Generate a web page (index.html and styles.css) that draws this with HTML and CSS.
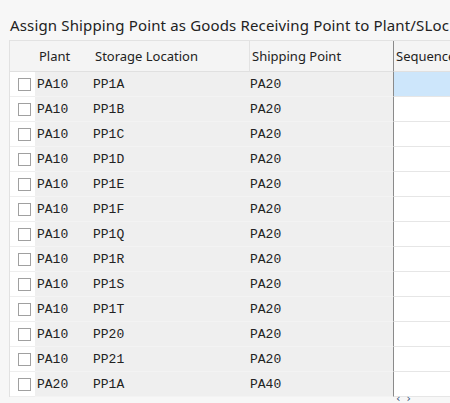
FILE: index.html
```html
<!DOCTYPE html>
<html>
<head>
<meta charset="utf-8">
<link rel="stylesheet" href="styles.css">
</head>
<body>
<div class="title">Assign Shipping Point as Goods Receiving Point to Plant/SLoc</div>
<div class="table">
  <div class="row head">
    <div class="c sel"></div>
    <div class="c plant">Plant</div>
    <div class="c sloc">Storage Location</div>
    <div class="c ship">Shipping Point</div>
    <div class="c seq">Sequence</div>
  </div>
  <div class="row active"><div class="c sel"><span class="cb"></span></div><div class="c plant">PA10</div><div class="c sloc">PP1A</div><div class="c ship">PA20</div><div class="c seq"></div></div>
  <div class="row"><div class="c sel"><span class="cb"></span></div><div class="c plant">PA10</div><div class="c sloc">PP1B</div><div class="c ship">PA20</div><div class="c seq"></div></div>
  <div class="row"><div class="c sel"><span class="cb"></span></div><div class="c plant">PA10</div><div class="c sloc">PP1C</div><div class="c ship">PA20</div><div class="c seq"></div></div>
  <div class="row"><div class="c sel"><span class="cb"></span></div><div class="c plant">PA10</div><div class="c sloc">PP1D</div><div class="c ship">PA20</div><div class="c seq"></div></div>
  <div class="row"><div class="c sel"><span class="cb"></span></div><div class="c plant">PA10</div><div class="c sloc">PP1E</div><div class="c ship">PA20</div><div class="c seq"></div></div>
  <div class="row"><div class="c sel"><span class="cb"></span></div><div class="c plant">PA10</div><div class="c sloc">PP1F</div><div class="c ship">PA20</div><div class="c seq"></div></div>
  <div class="row"><div class="c sel"><span class="cb"></span></div><div class="c plant">PA10</div><div class="c sloc">PP1Q</div><div class="c ship">PA20</div><div class="c seq"></div></div>
  <div class="row"><div class="c sel"><span class="cb"></span></div><div class="c plant">PA10</div><div class="c sloc">PP1R</div><div class="c ship">PA20</div><div class="c seq"></div></div>
  <div class="row"><div class="c sel"><span class="cb"></span></div><div class="c plant">PA10</div><div class="c sloc">PP1S</div><div class="c ship">PA20</div><div class="c seq"></div></div>
  <div class="row"><div class="c sel"><span class="cb"></span></div><div class="c plant">PA10</div><div class="c sloc">PP1T</div><div class="c ship">PA20</div><div class="c seq"></div></div>
  <div class="row"><div class="c sel"><span class="cb"></span></div><div class="c plant">PA10</div><div class="c sloc">PP20</div><div class="c ship">PA20</div><div class="c seq"></div></div>
  <div class="row"><div class="c sel"><span class="cb"></span></div><div class="c plant">PA10</div><div class="c sloc">PP21</div><div class="c ship">PA20</div><div class="c seq"></div></div>
  <div class="row"><div class="c sel"><span class="cb"></span></div><div class="c plant">PA20</div><div class="c sloc">PP1A</div><div class="c ship">PA40</div><div class="c seq"></div></div>
</div>
<div class="scroller"><span>&#8249;</span><span>&#8250;</span></div>
</body>
</html>
```
FILE: styles.css
```css
html, body {
  margin: 0;
  padding: 0;
  background: #f7f7f7;
  overflow: hidden;
  width: 450px;
  height: 403px;
}
.title {
  font-family: "Noto Sans", "DejaVu Sans", sans-serif;
  font-size: 15px;
  letter-spacing: 0.15px;
  color: #222;
  white-space: nowrap;
  padding: 15px 0 0 10px;
  height: 40px;
  line-height: 20px;
  box-sizing: border-box;
}
.table {
  margin-left: 9px;
  width: 560px;
  border-left: 1px solid #e2e2e2;
  border-top: 1px solid #e2e2e2;
}
.row {
  display: grid;
  grid-template-columns: 25px 56px 158px 145px 1fr;
  height: 25px;
}
.c {
  box-sizing: border-box;
  white-space: nowrap;
  overflow: hidden;
  display: flex;
  align-items: center;
  font-family: "Liberation Mono", "DejaVu Sans Mono", monospace;
  font-size: 13px;
  color: #222;
}
.row .sel {
  background: #fff;
  border-bottom: 1px solid #eeeeee;
  justify-content: center;
  padding-left: 3px;
}
.row .plant, .row .sloc, .row .ship {
  background: #efefef;
  border-bottom: 1px solid #f3f3f3;
}
.plant { padding-left: 2px; }
.sloc { padding-left: 2px; }
.ship { padding-left: 1px; border-right: 1px solid #8a8a8a; }
.row .seq {
  background: #fff;
  border-bottom: 1px solid #e6e6e6;
}
.row.active .seq { background: #cde6fb; }
.cb {
  width: 13px;
  height: 13px;
  border: 1px solid #a0a0a0;
  background: #fff;
  box-sizing: border-box;
}
.row.head {
  height: 31px;
}
.row.head .c {
  background: #f4f4f4;
  font-family: "Noto Sans", "DejaVu Sans", sans-serif;
  font-size: 13px;
  border-bottom: 1px solid #e0e0e0;
  color: #222;
}
.row.head .plant { padding-left: 4px; }
.row.head .sloc { padding-left: 4px; }
.row.head .ship { padding-left: 2px; border-left: 1px solid #e2e2e2; border-right: 1px solid #8a8a8a; }
.row.head .seq { padding-left: 2px; }
.scroller {
  position: absolute;
  left: 396px;
  top: 394px;
  font-family: "DejaVu Sans", sans-serif;
  font-size: 11px;
  color: #33507a;
  line-height: 10px;
  display: flex;
  gap: 6px;
}
```
